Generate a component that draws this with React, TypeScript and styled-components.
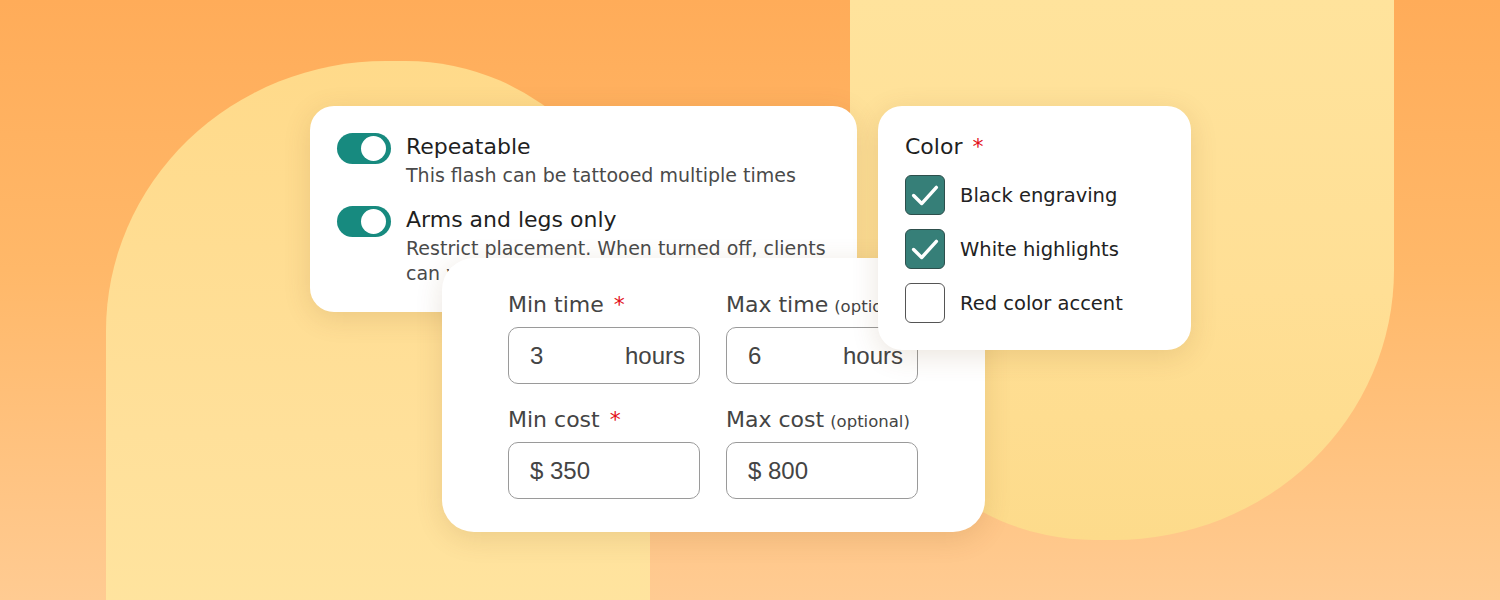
import React from "react";
import styled, { createGlobalStyle } from "styled-components";

const Global = createGlobalStyle`
  html, body { margin: 0; padding: 0; }
  body { font-family: "DejaVu Sans", "Open Sans", sans-serif; overflow: hidden; }
  * { box-sizing: border-box; }
`;

const Stage = styled.div`
  position: relative;
  width: 1500px;
  height: 600px;
  overflow: hidden;
  background: linear-gradient(180deg, #ffac59 0%, #ffb869 45%, #ffcb92 100%);
`;

const Arch = styled.div<{ $flip?: boolean }>`
  position: absolute;
  width: 544px;
  height: 620px;
  ${(p) =>
    p.$flip
      ? `
    left: 850px;
    top: -80px;
    border-radius: 0 0 280px 244px / 0 0 270px 254px;
    background: linear-gradient(180deg, #ffe49e 0%, #ffdf95 60%, #fddb8b 100%);
  `
      : `
    left: 106px;
    top: 61px;
    border-radius: 280px 244px 0 0 / 270px 254px 0 0;
    background: linear-gradient(180deg, #ffda8a 0%, #ffe09a 60%, #ffe5a0 100%);
  `}
`;

const Card = styled.div<{ $x: number; $y: number; $w: number; $h: number; $z: number; $r: number }>`
  position: absolute;
  left: ${(p) => p.$x}px;
  top: ${(p) => p.$y}px;
  width: ${(p) => p.$w}px;
  height: ${(p) => p.$h}px;
  z-index: ${(p) => p.$z};
  background: #fff;
  border-radius: ${(p) => p.$r}px;
  box-shadow: 0 6px 28px rgba(110, 70, 20, 0.14);
  overflow: hidden;
`;

/* ---------- toggles card ---------- */
const ToggleList = styled.div`
  display: flex;
  flex-direction: column;
  gap: 18px;
  padding: 27px 27px 0 27px;
`;

const ToggleRow = styled.div`
  display: flex;
  align-items: flex-start;
  gap: 15px;
`;

const Switch = styled.div<{ $on: boolean }>`
  flex: none;
  width: 54px;
  height: 31px;
  border-radius: 16px;
  background: ${(p) => (p.$on ? "#178a7f" : "#bbb")};
  display: flex;
  align-items: center;
  justify-content: ${(p) => (p.$on ? "flex-end" : "flex-start")};
  padding: 0 5px 0 4px;
`;

const Knob = styled.span`
  width: 25px;
  height: 25px;
  border-radius: 50%;
  background: #fff;
`;

const ToggleText = styled.div`
  display: flex;
  flex-direction: column;
`;

const ToggleTitle = styled.div`
  font-size: 22px;
  line-height: 28px;
  height: 30px;
  color: #1f1f1f;
`;

const ToggleSub = styled.div`
  font-size: 19px;
  line-height: 25px;
  color: #4a4a4a;
  white-space: nowrap;
`;

/* ---------- fields card ---------- */
const FieldGrid = styled.div`
  display: grid;
  grid-template-columns: 192px 192px;
  column-gap: 26px;
  row-gap: 21px;
  padding: 32px 0 0 66px;
`;

const Field = styled.div`
  display: flex;
  flex-direction: column;
  gap: 7px;
`;

const Label = styled.div`
  height: 30px;
  display: flex;
  align-items: baseline;
  font-size: 22px;
  line-height: 30px;
  color: #444;
  white-space: nowrap;
`;

const Req = styled.span`
  color: #e3101b;
  margin-left: 10px;
`;

const Optional = styled.span`
  font-size: 16.5px;
  margin-left: 6px;
`;

const Input = styled.div`
  height: 57px;
  border: 1.5px solid #9a9a9a;
  border-radius: 10px;
  display: flex;
  align-items: center;
  justify-content: space-between;
  padding: 0 14px 0 21px;
  font-family: "Liberation Sans", Arial, sans-serif;
  font-size: 24px;
  color: #444;
`;

/* ---------- color card ---------- */
const CheckList = styled.div`
  display: flex;
  flex-direction: column;
  gap: 14px;
  padding: 27px 27px;
`;

const CheckRow = styled.div`
  display: flex;
  align-items: center;
  gap: 15px;
`;

const Box = styled.div<{ $checked: boolean }>`
  flex: none;
  width: 40px;
  height: 40px;
  border-radius: 6px;
  border: 1.5px solid ${(p) => (p.$checked ? "#2d4f4c" : "#555")};
  background: ${(p) => (p.$checked ? "#367f78" : "#fff")};
  display: flex;
  align-items: center;
  justify-content: center;
`;

const CheckLabel = styled.div`
  font-size: 19.5px;
  color: #222;
`;

const ColorTitle = styled.div`
  display: flex;
  align-items: baseline;
  font-size: 22px;
  line-height: 28px;
  color: #1f1f1f;
`;

const Check = () => (
  <svg width="40" height="40" viewBox="0 0 40 40" fill="none">
    <path d="M8 20.5 L16.5 29 L32 12" stroke="#fff" strokeWidth="3.6" strokeLinecap="round" strokeLinejoin="round" />
  </svg>
);

const colors = [
  { label: "Black engraving", checked: true },
  { label: "White highlights", checked: true },
  { label: "Red color accent", checked: false },
];

export default function App() {
  return (
    <Stage>
      <Global />
      <Arch />
      <Arch $flip />

      <Card $x={310} $y={106} $w={547} $h={206} $z={1} $r={24}>
        <ToggleList>
          <ToggleRow>
            <Switch $on>
              <Knob />
            </Switch>
            <ToggleText>
              <ToggleTitle>Repeatable</ToggleTitle>
              <ToggleSub>This flash can be tattooed multiple times</ToggleSub>
            </ToggleText>
          </ToggleRow>
          <ToggleRow>
            <Switch $on>
              <Knob />
            </Switch>
            <ToggleText>
              <ToggleTitle>Arms and legs only</ToggleTitle>
              <ToggleSub>
                Restrict placement. When turned off, clients
                <br />
                can view every placement option
              </ToggleSub>
            </ToggleText>
          </ToggleRow>
        </ToggleList>
      </Card>

      <Card $x={442} $y={258} $w={543} $h={274} $z={2} $r={32}>
        <FieldGrid>
          <Field>
            <Label>
              Min time<Req>*</Req>
            </Label>
            <Input>
              <span>3</span>
              <span>hours</span>
            </Input>
          </Field>
          <Field>
            <Label>
              Max time<Optional>(optional)</Optional>
            </Label>
            <Input>
              <span>6</span>
              <span>hours</span>
            </Input>
          </Field>
          <Field>
            <Label>
              Min cost<Req>*</Req>
            </Label>
            <Input>
              <span>$ 350</span>
            </Input>
          </Field>
          <Field>
            <Label>
              Max cost<Optional>(optional)</Optional>
            </Label>
            <Input>
              <span>$ 800</span>
            </Input>
          </Field>
        </FieldGrid>
      </Card>

      <Card $x={878} $y={106} $w={313} $h={244} $z={3} $r={24}>
        <CheckList>
          <ColorTitle>
            Color<Req>*</Req>
          </ColorTitle>
          {colors.map((c) => (
            <CheckRow key={c.label}>
              <Box $checked={c.checked}>{c.checked && <Check />}</Box>
              <CheckLabel>{c.label}</CheckLabel>
            </CheckRow>
          ))}
        </CheckList>
      </Card>
    </Stage>
  );
}
